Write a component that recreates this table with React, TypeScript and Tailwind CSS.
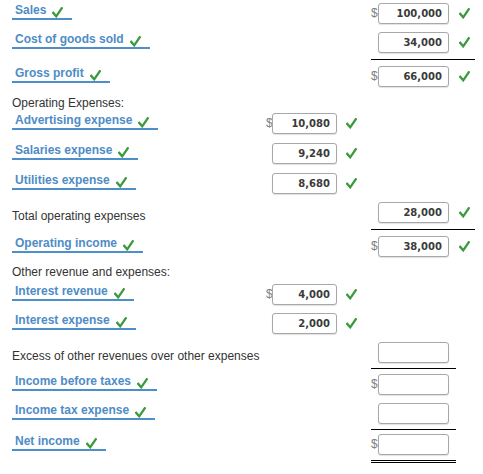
import React from 'react'

type Cell = { dollar?: boolean; value?: string; check?: boolean }
type Row = {
  label: string
  kind: 'link' | 'text' | 'heading'
  mt: string
  mid?: Cell
  right?: Cell
  line?: 'single' | 'short' | 'double'
  lineMt?: string
}

const rows: Row[] = [
  { label: 'Sales', kind: 'link', mt: 'mt-[3px]', right: { dollar: true, value: '100,000', check: true } },
  { label: 'Cost of goods sold', kind: 'link', mt: 'mt-[8px]', right: { value: '34,000', check: true }, line: 'single', lineMt: 'mt-[6px]' },
  { label: 'Gross profit', kind: 'link', mt: 'mt-[6px]', right: { dollar: true, value: '66,000', check: true } },
  { label: 'Operating Expenses:', kind: 'heading', mt: 'mt-[9px]' },
  { label: 'Advertising expense', kind: 'link', mt: 'mt-[3px]', mid: { dollar: true, value: '10,080', check: true } },
  { label: 'Salaries expense', kind: 'link', mt: 'mt-[9px]', mid: { value: '9,240', check: true } },
  { label: 'Utilities expense', kind: 'link', mt: 'mt-[9px]', mid: { value: '8,680', check: true } },
  { label: 'Total operating expenses', kind: 'text', mt: 'mt-[8px]', right: { value: '28,000', check: true }, line: 'single', lineMt: 'mt-[6px]' },
  { label: 'Operating income', kind: 'link', mt: 'mt-[6px]', right: { dollar: true, value: '38,000', check: true } },
  { label: 'Other revenue and expenses:', kind: 'heading', mt: 'mt-[8px]' },
  { label: 'Interest revenue', kind: 'link', mt: 'mt-[5px]', mid: { dollar: true, value: '4,000', check: true } },
  { label: 'Interest expense', kind: 'link', mt: 'mt-[8px]', mid: { value: '2,000', check: true } },
  { label: 'Excess of other revenues over other expenses', kind: 'text', mt: 'mt-[8px]', right: { value: '' }, line: 'short', lineMt: 'mt-[5px]' },
  { label: 'Income before taxes', kind: 'link', mt: 'mt-[5px]', right: { dollar: true, value: '' } },
  { label: 'Income tax expense', kind: 'link', mt: 'mt-[8px]', right: { value: '' }, line: 'short', lineMt: 'mt-[5px]' },
  { label: 'Net income', kind: 'link', mt: 'mt-[4px]', right: { dollar: true, value: '' }, line: 'double', lineMt: 'mt-[5px]' },
]

function Check({ className = '' }: { className?: string }) {
  return (
    <svg width="11" height="11" viewBox="0 0 11 11" className={className}>
      <path d="M1.2 5.8 L4.2 9.3 L9.8 1.2" fill="none" stroke="#3b9a3b" strokeWidth="2.3" strokeLinecap="square" strokeLinejoin="miter" />
    </svg>
  )
}

function Box({ cell, width }: { cell: Cell; width: string }) {
  return (
    <div className={`${width} h-[21px] flex items-center justify-end pr-[6px] border border-[#a8a8a8] rounded-[3px] bg-white shadow-[0_1px_1px_rgba(0,0,0,0.12)] font-['DejaVu_Sans',sans-serif] font-bold text-[10px] text-[#3a3a3a]`}>
      {cell.value}
    </div>
  )
}

function Dollar({ show, width }: { show?: boolean; width: string }) {
  return (
    <span className={`${width} text-[12px] leading-[21px] text-[#808080] font-['Liberation_Sans',sans-serif] overflow-visible whitespace-nowrap`}>
      {show ? '$' : ''}
    </span>
  )
}

function Label({ row }: { row: Row }) {
  if (row.kind === 'link') {
    return (
      <div className="inline-flex items-end gap-[6px] pl-[3px] pr-[9px] pb-[1px] border-b-2 border-[#4c8fcb]">
        <span className="leading-[14px] text-[12px] font-bold text-[#4e8cc6] font-['Liberation_Sans',sans-serif] whitespace-nowrap">{row.label}</span>
        <Check className="mb-[-1px]" />
      </div>
    )
  }
  return (
    <span className="leading-[14px] text-[12px] text-[#333] font-['Liberation_Sans',sans-serif] whitespace-nowrap">{row.label}</span>
  )
}

export default function App() {
  return (
    <div className="w-[483px] h-[474px] bg-white overflow-hidden flex flex-col">
      {rows.map(row => (
        <React.Fragment key={row.label}>
          {row.kind === 'heading' ? (
            <div className={`${row.mt} pl-[12px] h-[14px] flex items-start`}>
              <Label row={row} />
            </div>
          ) : (
            <div className={`${row.mt} flex h-[21px]`}>
              <div className={`w-[266px] pl-[12px] flex ${row.kind === 'text' ? 'items-end' : 'items-start'}`}>
                <Label row={row} />
              </div>
              <div className="w-[105px] flex items-center">
                {row.mid && (
                  <>
                    <Dollar show={row.mid.dollar} width="w-[6px]" />
                    <Box cell={row.mid} width="w-[65px]" />
                    {row.mid.check && <Check className="ml-[9px]" />}
                  </>
                )}
              </div>
              <div className="w-[104px] flex items-center">
                {row.right && (
                  <>
                    <Dollar show={row.right.dollar} width="w-[7px]" />
                    <Box cell={row.right} width="w-[71px]" />
                    {row.right.check && <Check className="ml-[10px]" />}
                  </>
                )}
              </div>
            </div>
          )}
          {row.line === 'single' && <div className={`${row.lineMt} ml-[371px] w-[104px] h-px bg-black`} />}
          {row.line === 'short' && <div className={`${row.lineMt} ml-[371px] w-[85px] h-px bg-black`} />}
          {row.line === 'double' && <div className={`${row.lineMt} ml-[371px] w-[85px] h-[3px] border-y border-black`} />}
        </React.Fragment>
      ))}
    </div>
  )
}
